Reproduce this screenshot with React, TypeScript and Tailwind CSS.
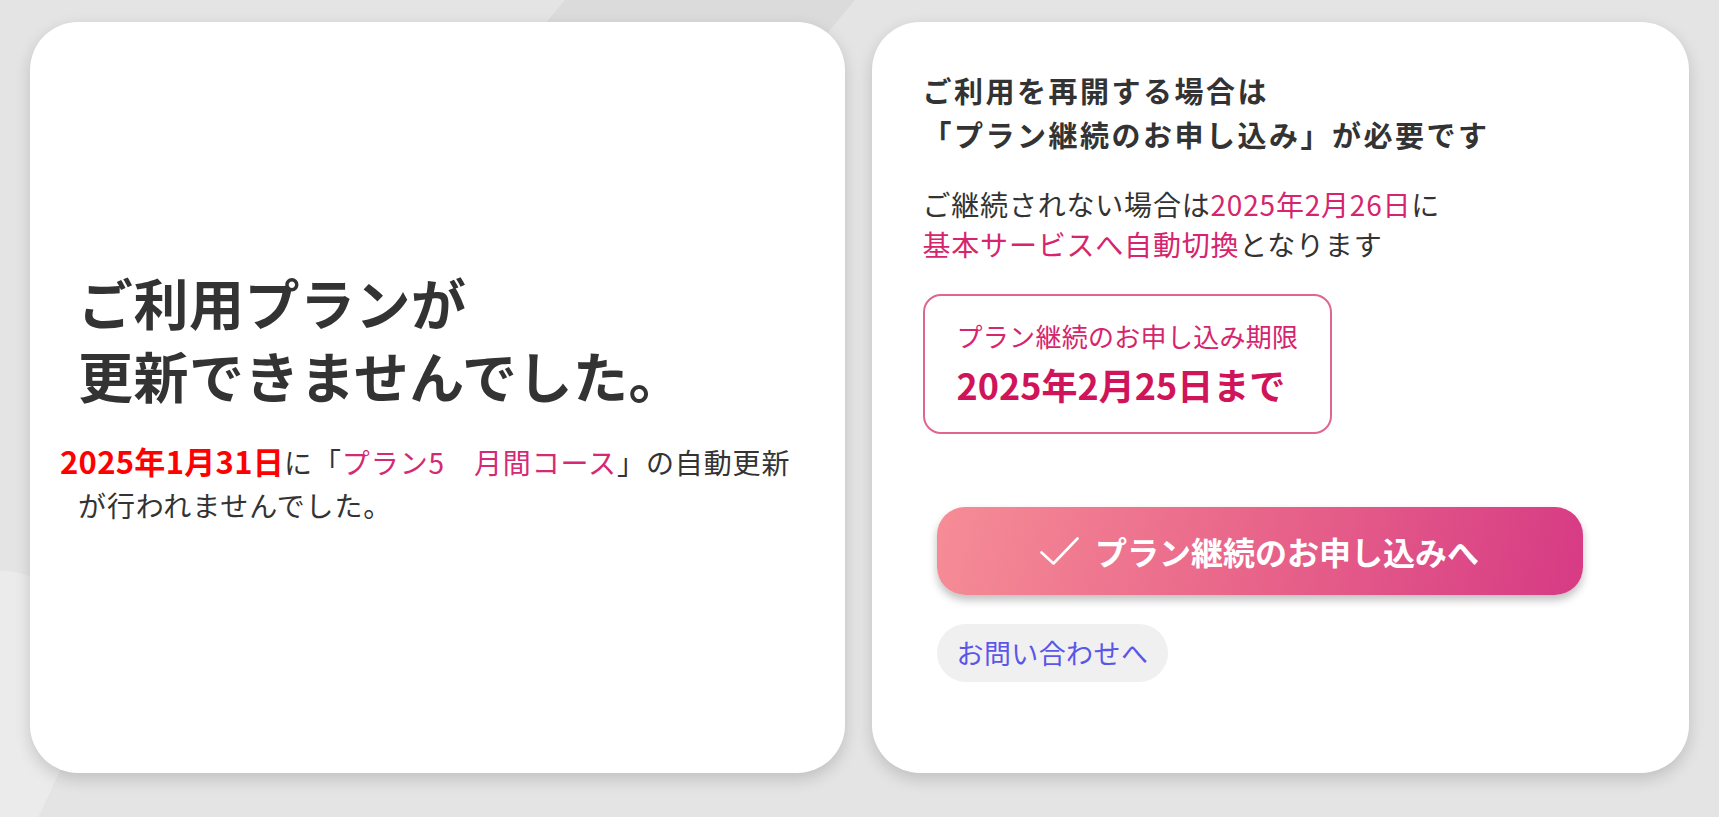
import React from "react";

// Plan renewal failed notice: two white cards on a gray page

const jp = "font-['Noto_Sans_CJK_JP','Noto_Sans',sans-serif]";

function CheckIcon() {
  return (
    <svg width="39" height="28" viewBox="0 0 39 28" fill="none">
      <polyline
        points="1.5,15.5 13.5,26.5 37.5,1.5"
        stroke="white"
        strokeWidth="2.6"
        strokeLinecap="round"
        strokeLinejoin="round"
      />
    </svg>
  );
}

function FailedCard() {
  return (
    <div className="flex h-[751px] min-w-0 flex-1 flex-col justify-center rounded-[48px] bg-white pb-[4px] pl-[48px] shadow-[0_6px_16px_rgba(0,0,0,0.16)]">
      <h1 className="text-[55px] font-bold leading-[73px] tracking-[0.5px] text-[#333333]">
        ご利用プランが
        <br />
        更新できませんでした。
      </h1>
      <p className="mt-[28px] whitespace-nowrap text-[28px] leading-[43px] tracking-[0.9px] text-[#333333]">
        <span className="-ml-[18px] text-[31px] font-bold tracking-[0.3px] text-[#ff0000]">
          2025年1月31日
        </span>
        に「<span className="text-[#d42a74]">プラン5　月間コース</span>」の自動更新
        <br />
        が行われませんでした。
      </p>
    </div>
  );
}

function RenewCard() {
  return (
    <div className="flex h-[751px] min-w-0 flex-1 flex-col rounded-[48px] bg-white pl-[51px] pt-[46px] shadow-[0_6px_16px_rgba(0,0,0,0.16)]">
      <h2 className="text-[29px] font-bold leading-[44px] tracking-[2.5px] text-[#333333]">
        ご利用を再開する場合は
        <br />
        「プラン継続のお申し込み」が必要です
      </h2>
      <p className="mt-[28px] text-[28px] leading-[40px] tracking-[0.8px] text-[#333333]">
        ご継続されない場合は<span className="text-[#d6246e]">2025年2月26日</span>に
        <br />
        <span className="text-[#d6246e]">基本サービスへ自動切換</span>となります
      </p>
      <div className="mt-[30px] w-[409px] rounded-[18px] border-2 border-[#e0668f] pb-[23px] pl-[32px] pt-[20px]">
        <div className="text-[26px] leading-[40px] tracking-[0.3px] text-[#d6246e]">
          プラン継続のお申し込み期限
        </div>
        <div className="mt-[3px] text-[36px] font-bold leading-[50px] text-[#d0145a]">
          2025年2月25日まで
        </div>
      </div>
      <button className="ml-[14px] mt-[73px] flex h-[88px] w-[646px] items-center justify-center gap-[16px] rounded-[28px] bg-[linear-gradient(105deg,#f68d96_0%,#e8648a_50%,#d63a84_100%)] shadow-[0_5px_8px_rgba(0,0,0,0.25)]">
        <CheckIcon />
        <span className="text-[32px] font-bold text-white">
          プラン継続のお申し込みへ
        </span>
      </button>
      <button className="ml-[14px] mt-[29px] flex h-[58px] w-fit items-center rounded-full bg-[#f0f0f0] px-[20px] text-[27px] tracking-[0.4px] text-[#5b56e8]">
        お問い合わせへ
      </button>
    </div>
  );
}

export default function App() {
  return (
    <div className={`relative h-[817px] w-full overflow-hidden bg-[#e4e4e4] ${jp}`}>
      {/* faint diagonal shapes in the background */}
      <div className="absolute left-[565px] top-0 h-[200px] w-[290px] origin-top-left -skew-x-[40deg] bg-[#dbdbdb]" />
      <div className="absolute left-[-150px] top-[560px] h-[420px] w-[200px] rotate-[25deg] rounded-full bg-[#ebebeb]" />
      <div className="relative flex gap-[27px] px-[30px] pt-[22px]">
        <FailedCard />
        <RenewCard />
      </div>
    </div>
  );
}
